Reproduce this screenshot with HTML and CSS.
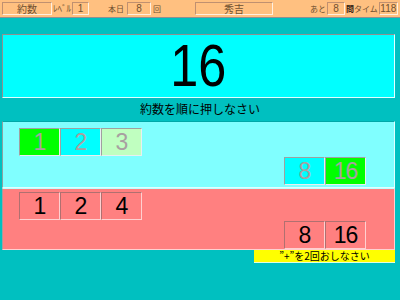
FILE: index.html
```html
<!DOCTYPE html>
<html lang="ja">

<head>
    <meta charset="UTF-8">
    <title>約数</title>
    <link rel="stylesheet" href="styles.css">
</head>

<body>

    <div class="topbar">
        <span class="field mode">約数</span>
        <span class="label lvl-label">ﾚﾍﾞﾙ</span>
        <span class="field lvl">1</span>
        <span class="label today">本日</span>
        <span class="field count">8</span>
        <span class="label times">回</span>
        <span class="field player">秀吉</span>
        <span class="label left">あと</span>
        <span class="field remain">8</span>
        <span class="label q">問</span>
        <span class="label">タイム</span>
        <span class="field time">118</span>
    </div>

    <div class="question">
        <span class="num">16</span>
    </div>
    <p class="prompt">約数を順に押しなさい</p>

    <div class="panel answer">
        <div class="row">
            <div class="cell on">1</div>
            <div class="cell now">2</div>
            <div class="cell next">3</div>
        </div>
        <div class="row end">
            <div class="cell now">8</div>
            <div class="cell on">16</div>
        </div>
    </div>

    <div class="panel typed">
        <div class="row">
            <div class="cell">1</div>
            <div class="cell">2</div>
            <div class="cell">4</div>
        </div>
        <div class="row end">
            <div class="cell">8</div>
            <div class="cell">16</div>
        </div>
    </div>

    <div class="hint">”+”を2回おしなさい</div>

</body>

</html>
```

FILE: styles.css
```css
body {
    margin: 0;
    background-color: #00c0c0;
    font-family: "Noto Sans CJK JP", sans-serif;
    color: #000;
}

/* top status bar */
.topbar {
    height: 17px;
    background-color: #ffc080;
    border-bottom: 1px solid #909090;
    display: flex;
    align-items: center;
    padding-left: 2px;
    font-size: 10px;
    color: #705030;
    white-space: nowrap;
}

.topbar span {
    flex-shrink: 0;
}

.field {
    height: 11px;
    line-height: 11px;
    border: 1px solid;
    border-color: #c09070 #fff0e0 #fff0e0 #c09070;
    text-align: center;
    font-family: "Liberation Sans", "Noto Sans CJK JP", sans-serif;
}

.label {
    line-height: 11px;
    font-size: 8px;
}

.mode { width: 48px; font-family: "Noto Sans CJK JP", sans-serif; }
.lvl-label { margin-left: 1px; width: 17px; font-size: 9px; }
.lvl { margin-left: 2px; width: 15px; }
.today { margin-left: 19px; }
.count { margin-left: 3px; width: 22px; }
.times { margin-left: 2px; }
.player { margin-left: 34px; width: 76px; font-family: "Noto Sans CJK JP", sans-serif; }
.left { margin-left: 37px; }
.remain { margin-left: 1px; width: 16px; }
.q { margin-left: 1px; font-weight: bold; color: #302010; }
.time { margin-left: 1px; width: 17px; }

/* the number to factor */
.question {
    margin: 16px 5px 0 2px;
    height: 62px;
    background-color: #00ffff;
    border: 1px solid;
    border-color: #909090 #e0ffff #e0ffff #909090;
    display: flex;
    justify-content: center;
    align-items: center;
}

.num {
    display: inline-block;
    font-family: "Liberation Sans", sans-serif;
    font-size: 60px;
    line-height: 60px;
    transform: scaleX(0.84);
}

.prompt {
    margin: 0;
    height: 23px;
    line-height: 22px;
    text-align: center;
    font-size: 12px;
}

/* answer panels */
.panel {
    margin: 0 5px 0 2px;
    border: 1px solid;
    border-color: #90a0a0 #e0ffff #e0ffff #90a0a0;
    padding: 6px 28px 0 16px;
}

.answer {
    height: 59px;
    background-color: #80ffff;
    border-top-color: #00a8a8;
}

.typed {
    height: 57px;
    background-color: #ff8080;
    border-color: #c0ffff #ffd0d0 #ffd0d0 #a0a0a0;
    padding-top: 3px;
}

.row {
    display: flex;
}

.row.end {
    justify-content: flex-end;
    margin-top: 1px;
}

.cell {
    width: 39px;
    height: 26px;
    border: 1px solid;
    border-color: #a0a0a0 #e8f0f0 #e8f0f0 #a0a0a0;
    text-align: center;
    font-family: "Liberation Sans", sans-serif;
    font-size: 23px;
    line-height: 26px;
    letter-spacing: -1px;
}

.answer .cell {
    color: #a8a0a0;
}

.typed .cell {
    border-color: #b07070 #ffd0d0 #ffd0d0 #b07070;
}

.on { background-color: #00ff00; }
.now { background-color: #00ffff; }
.next { background-color: #c0ffc0; }

.hint {
    margin: 0 5px 0 254px;
    height: 12px;
    line-height: 12px;
    background-color: #ffff00;
    border-bottom: 1px solid #e0ffe0;
    text-align: center;
    font-size: 10px;
}
```
